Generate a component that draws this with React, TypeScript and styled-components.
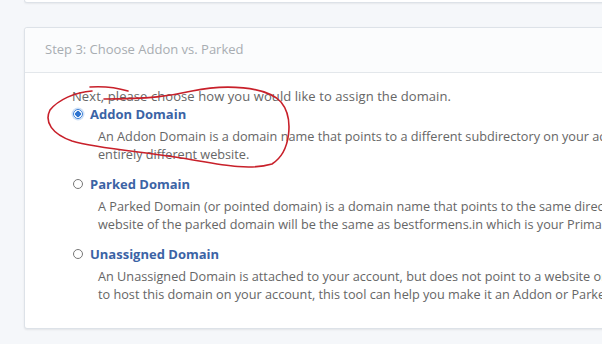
import React from "react";
import styled, { createGlobalStyle } from "styled-components";

const Global = createGlobalStyle`
  html, body {
    margin: 0;
    padding: 0;
    width: 602px;
    height: 344px;
    overflow: hidden;
    background: #f5f7fa;
  }
  body {
    font-family: "Open Sans", "Liberation Sans", Arial, sans-serif;
    font-size: 13px;
    color: #666;
  }
`;

const Page = styled.div`
  position: relative;
  display: flex;
  flex-direction: column;
  gap: 24px;
  padding-left: 24px;
  width: 1100px;
`;

const PrevCard = styled.div`
  height: 2px;
  background: #fff;
  border: 1px solid #dde2e8;
  border-top: none;
  border-radius: 0 0 3px 3px;
  box-shadow: 0 1px 2px rgba(0, 0, 0, 0.06);
`;

const Card = styled.section`
  background: #fff;
  border: 1px solid #dde2e8;
  border-radius: 3px;
  box-shadow: 0 1px 2px rgba(0, 0, 0, 0.08);
`;

const CardHeader = styled.header`
  padding: 12px 20px 14px;
  line-height: 18px;
  background: #fbfcfd;
  border-bottom: 1px solid #e3e7eb;
  color: #a8adb2;
  border-radius: 3px 3px 0 0;
`;

const CardBody = styled.div`
  padding: 14px 0 25px 47px;
  display: flex;
  flex-direction: column;
  gap: 12px;
  line-height: 18px;
`;

const Intro = styled.p`
  margin: 0 0 -12px;
  color: #666;
  letter-spacing: 0.08px;
`;

const Option = styled.div`
  display: flex;
  flex-direction: column;
  gap: 4px;
`;

const LabelRow = styled.label`
  display: flex;
  align-items: center;
  gap: 7px;
  color: #3b63a5;
  font-weight: 700;
`;

const Radio = styled.span<{ $checked?: boolean }>`
  box-sizing: border-box;
  width: 10px;
  height: 10px;
  border-radius: 50%;
  margin-left: 1px;
  border: 1px solid ${(p) => (p.$checked ? "#3a7fd6" : "#777")};
  background: ${(p) =>
    p.$checked ? "radial-gradient(circle, #2f74d0 0 2.6px, #fff 3px)" : "#fff"};
  box-shadow: ${(p) => (p.$checked ? "0 0 0 1.5px #cfe0f6" : "none")};
`;

const Desc = styled.div`
  padding-left: 26px;
  color: #666;
  font-size: 12.7px;
  white-space: nowrap;
`;

const Scribble = styled.svg`
  position: absolute;
  left: 0;
  top: 0;
  pointer-events: none;
`;

const options = [
  {
    label: "Addon Domain",
    checked: true,
    lines: [
      "An Addon Domain is a domain name that points to a different subdirectory on your account. This allows you to host an",
      "entirely different website.",
    ],
  },
  {
    label: "Parked Domain",
    checked: false,
    lines: [
      "A Parked Domain (or pointed domain) is a domain name that points to the same directory as your primary domain. The",
      "website of the parked domain will be the same as bestformens.in which is your Primary Domain.",
    ],
  },
  {
    label: "Unassigned Domain",
    checked: false,
    lines: [
      "An Unassigned Domain is attached to your account, but does not point to a website or directory. If you would like",
      "to host this domain on your account, this tool can help you make it an Addon or Parked Domain.",
    ],
  },
];

export default function App() {
  return (
    <>
      <Global />
      <Page>
        <PrevCard />
        <Card>
          <CardHeader>Step 3: Choose Addon vs. Parked</CardHeader>
          <CardBody>
            <Intro>Next, please choose how you would like to assign the domain.</Intro>
            {options.map((o) => (
              <Option key={o.label}>
                <LabelRow>
                  <Radio $checked={o.checked} />
                  {o.label}
                </LabelRow>
                <Desc>
                  {o.lines[0]}
                  <br />
                  {o.lines[1]}
                </Desc>
              </Option>
            ))}
          </CardBody>
        </Card>
        <Scribble width="602" height="344" viewBox="0 0 602 344">
          <path
            d="M 90 87 C 105 86, 118 88, 128 91 M 92 91 C 75 92, 58 100, 50 110 C 44 122, 52 134, 72 141 C 95 148, 135 151, 175 157 C 210 162, 245 172, 272 164 C 291 152, 294 118, 281 102 C 266 86, 225 84, 192 91 C 170 96, 150 99, 104 99"
            fill="none"
            stroke="#c8202a"
            strokeWidth="1.6"
            strokeLinecap="round"
            strokeLinejoin="round"
          />
        </Scribble>
      </Page>
    </>
  );
}
